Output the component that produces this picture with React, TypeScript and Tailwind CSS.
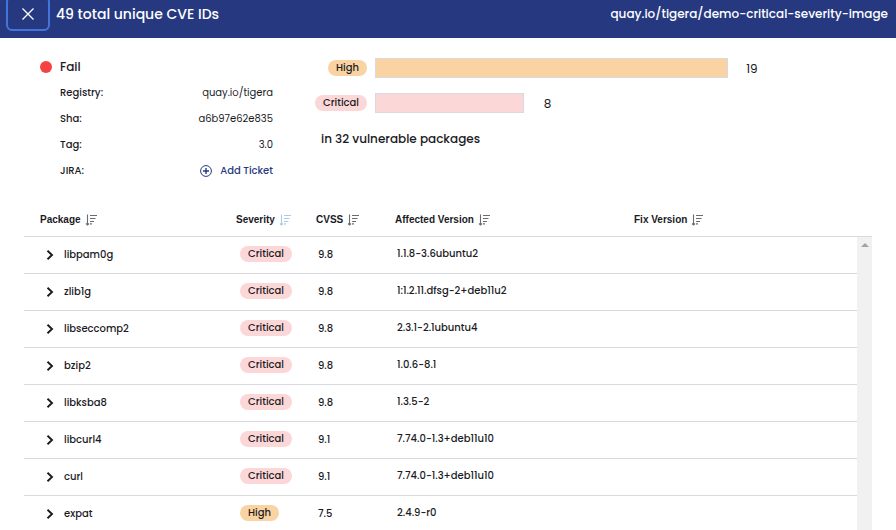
import React from "react";

type Severity = "Critical" | "High";

interface Finding {
  name: string;
  severity: Severity;
  cvss: string;
  affected: string;
}

const findings: Finding[] = [
  { name: "libpam0g", severity: "Critical", cvss: "9.8", affected: "1.1.8-3.6ubuntu2" },
  { name: "zlib1g", severity: "Critical", cvss: "9.8", affected: "1:1.2.11.dfsg-2+deb11u2" },
  { name: "libseccomp2", severity: "Critical", cvss: "9.8", affected: "2.3.1-2.1ubuntu4" },
  { name: "bzip2", severity: "Critical", cvss: "9.8", affected: "1.0.6-8.1" },
  { name: "libksba8", severity: "Critical", cvss: "9.8", affected: "1.3.5-2" },
  { name: "libcurl4", severity: "Critical", cvss: "9.1", affected: "7.74.0-1.3+deb11u10" },
  { name: "curl", severity: "Critical", cvss: "9.1", affected: "7.74.0-1.3+deb11u10" },
  { name: "expat", severity: "High", cvss: "7.5", affected: "2.4.9-r0" },
];

const columns = [
  { label: "Package", width: "w-[212px]", pad: "pl-4", sorted: false },
  { label: "Severity", width: "w-[80px]", pad: "", sorted: true },
  { label: "CVSS", width: "w-[79px]", pad: "", sorted: false },
  { label: "Affected Version", width: "w-[239px]", pad: "", sorted: false },
  { label: "Fix Version", width: "", pad: "", sorted: false },
];

const counts: { severity: Severity; count: number }[] = [
  { severity: "High", count: 19 },
  { severity: "Critical", count: 8 },
];

const details = [
  { term: "Registry:", value: "quay.io/tigera" },
  { term: "Sha:", value: "a6b97e62e835" },
  { term: "Tag:", value: "3.0" },
];

function Badge({ severity }: { severity: Severity }) {
  const tone = severity === "Critical" ? "bg-[#fcd7d8]" : "bg-[#fad3a2]";
  return (
    <span className={`block h-4 w-fit rounded-full px-2 text-[10px] leading-4 font-medium ${tone}`}>
      {severity}
    </span>
  );
}

function SortIcon({ active }: { active: boolean }) {
  return (
    <svg
      viewBox="0 0 12 12"
      className={`mt-0.5 h-3 w-3 ${active ? "text-[#a9cbe6]" : "text-[#6b6c6e]"}`}
      fill="none"
      stroke="currentColor"
      aria-hidden="true"
    >
      <path d="M2.5 .5v10.5M1 9.5l1.5 1.5L4 9.5" strokeWidth="1.1" />
      <path d="M5 1.5h7M5 4.5h5.5M5 7.5h4M5 9.8h2" strokeWidth="1.2" />
    </svg>
  );
}

export default function App() {
  return (
    <div className="flex h-screen flex-col overflow-hidden bg-white font-['Poppins','Inter',sans-serif] text-[#1b1b1f]">
      <header className="flex h-[38px] shrink-0 items-start justify-between bg-[#263980] pr-2 pl-[6px] text-white">
        <div className="flex items-start gap-[6px]">
          <button
            type="button"
            aria-label="Close"
            className="-mt-1 flex h-[35px] w-11 items-center justify-center rounded-md border-2 border-[#4374d9]"
          >
            <svg viewBox="0 0 12 12" className="h-3 w-3" fill="none" stroke="currentColor" strokeWidth="1.3" aria-hidden="true">
              <path d="M.5.5l11 11M11.5.5l-11 11" />
            </svg>
          </button>
          <h1 className="text-sm leading-7 font-medium">49 total unique CVE IDs</h1>
        </div>
        <p className="text-xs leading-7 font-medium">quay.io/tigera/demo-critical-severity-image</p>
      </header>

      <main className="flex min-h-0 flex-1 flex-col px-6">
        <section className="flex h-[164px] shrink-0 pt-5">
          <div className="w-[249px] pl-4">
            <div className="flex h-[18px] items-center gap-2">
              <span className="h-3 w-3 rounded-full bg-[#f44242]" />
              <span className="text-xs font-medium">Fail</span>
            </div>
            <dl className="mt-1 pl-5 text-[10px] leading-[26px]">
              {details.map((d) => (
                <div key={d.term} className="flex justify-between">
                  <dt className="font-medium">{d.term}</dt>
                  <dd>{d.value}</dd>
                </div>
              ))}
              <div className="flex justify-between">
                <dt className="font-medium">JIRA:</dt>
                <dd>
                  <button type="button" className="flex items-center gap-2 font-medium text-[#263980]">
                    <svg viewBox="0 0 12 12" className="h-3 w-3" fill="none" stroke="currentColor" aria-hidden="true">
                      <circle cx="6" cy="6" r="5.4" strokeWidth="1" />
                      <path d="M6 3v6M3 6h6" strokeWidth="1.4" />
                    </svg>
                    Add Ticket
                  </button>
                </dd>
              </div>
            </dl>
          </div>

          <div className="ml-[42px] flex-1">
            {counts.map((c) => (
              <div key={c.severity} className="mb-[15px] flex h-5 items-center">
                <div className="mr-2 flex w-[52px] shrink-0 justify-end">
                  <Badge severity={c.severity} />
                </div>
                <div className="flex flex-1 items-center">
                  <div
                    className={`h-5 border border-[#d9dadf] ${c.severity === "High" ? "bg-[#fad3a2]" : "bg-[#fcd7d8]"}`}
                    style={{ width: `${(c.count / 19) * 71}%` }}
                  />
                  <span className="ml-3 w-6 pt-0.5 text-center text-xs">{c.count}</span>
                </div>
              </div>
            ))}
            <p className="pl-[6px] text-xs leading-[22px] font-medium">in 32 vulnerable packages</p>
          </div>
        </section>

        <section className="flex min-h-0 flex-1 items-stretch">
          <table className="h-fit flex-1 table-fixed border-separate border-spacing-0 text-left">
            <thead>
              <tr>
                {columns.map((c) => (
                  <th key={c.label} scope="col" className={`border-b border-[#d9dadf] p-0 align-top ${c.width} ${c.pad}`}>
                    <button
                      type="button"
                      className="flex h-[34px] items-center gap-1 font-['Liberation_Sans',Arial,sans-serif] text-[10px] font-bold whitespace-nowrap"
                    >
                      {c.label}
                      <SortIcon active={c.sorted} />
                    </button>
                  </th>
                ))}
              </tr>
            </thead>
            <tbody className="text-[10px] font-medium [&_td]:h-[37px] [&_td]:border-b [&_td]:border-[#d9dadf] [&_td]:pt-0 [&_td]:pr-0">
              {findings.map((f) => (
                <tr key={f.name}>
                  <td className="pb-0.5 pl-[22px]">
                    <button type="button" className="flex items-center gap-[10px]">
                      <svg viewBox="0 0 8 10" className="mt-0.5 h-[10px] w-2" fill="none" stroke="currentColor" strokeWidth="1.9" aria-hidden="true">
                        <path d="M1.5.8L6 5 1.5 9.2" />
                      </svg>
                      {f.name}
                    </button>
                  </td>
                  <td className="pb-0.5 pl-1">
                    <Badge severity={f.severity} />
                  </td>
                  <td className="pb-0.5 pl-0.5">{f.cvss}</td>
                  <td className="pb-1 pl-0.5">{f.affected}</td>
                  <td className="pb-0.5 pl-0" />
                </tr>
              ))}
            </tbody>
          </table>
          <div className="flex w-[15px] shrink-0 flex-col" aria-hidden="true">
            <div className="h-[35px] shrink-0 border-b border-[#d9dadf]" />
            <div className="flex flex-1 justify-center bg-[#f1f1f1] pt-[6px]">
              <svg viewBox="0 0 8 4" className="h-1 w-2 fill-[#a3a3a3]">
                <path d="M4 0l4 4H0z" />
              </svg>
            </div>
          </div>
        </section>
      </main>
    </div>
  );
}
